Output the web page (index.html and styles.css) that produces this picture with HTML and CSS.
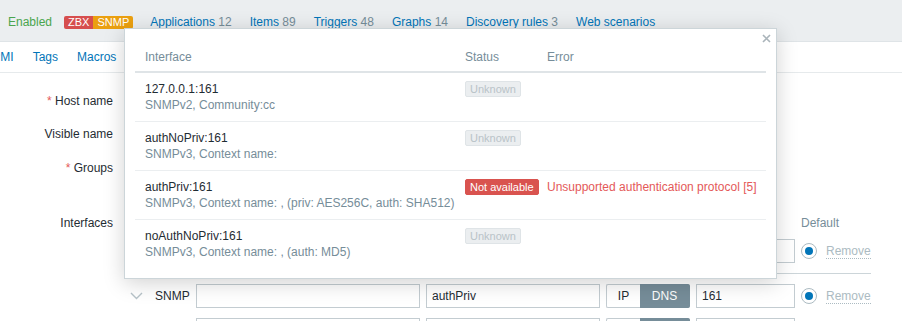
FILE: index.html
```html
<!DOCTYPE html>
<html>
  <head>
    <title>Host</title>
    <meta charset="UTF-8">
    <link rel="stylesheet" href="styles.css">
  </head>

  <body>
    <div class="host-bar">
      <span class="status-on">Enabled</span>
      <span class="avail">
        <span class="avail-red">ZBX</span><span class="avail-yellow">SNMP</span>
      </span>
      <nav class="host-nav">
        <a href="#">Applications <span class="count">12</span></a>
        <a href="#">Items <span class="count">89</span></a>
        <a href="#">Triggers <span class="count">48</span></a>
        <a href="#">Graphs <span class="count">14</span></a>
        <a href="#">Discovery rules <span class="count">3</span></a>
        <a href="#">Web scenarios</a>
      </nav>
    </div>

    <ul class="tabs">
      <li><a href="#">IPMI</a></li>
      <li><a href="#">Tags</a></li>
      <li><a href="#">Macros</a></li>
      <li><a href="#">Inventory</a></li>
      <li><a href="#">Encryption</a></li>
    </ul>

    <form class="form">
      <div class="form-row">
        <label class="req">Host name</label>
        <div><input class="input wide" type="text" value="snmp-test"></div>
      </div>
      <div class="form-row">
        <label>Visible name</label>
        <div><input class="input wide" type="text"></div>
      </div>
      <div class="form-row">
        <label class="req groups">Groups</label>
        <div><div class="multiselect"></div></div>
      </div>
      <div class="form-row">
        <label>Interfaces</label>
        <div class="ifaces">
          <div class="iface-head">
            <span class="c-toggle"></span>
            <span class="c-type">Type</span>
            <span class="c-ip">IP address</span>
            <span class="c-dns">DNS name</span>
            <span class="c-conn">Connect to</span>
            <span class="c-port">Port</span>
            <span class="c-def">Default</span>
          </div>

          <div class="iface-row first">
            <span class="c-toggle"><svg class="chevron" width="13" height="8" viewBox="0 0 13 8"><polyline points="1,1 6.5,6.5 12,1" /></svg></span>
            <span class="c-type">SNMP</span>
            <input class="input c-ip" type="text" value="127.0.0.1">
            <input class="input c-dns" type="text">
            <span class="toggle c-conn"><span class="on">IP</span><span>DNS</span></span>
            <input class="input c-port" type="text" value="161">
            <span class="c-def"><span class="radio"></span></span>
            <a class="remove">Remove</a>
          </div>

          <div class="iface-row">
            <span class="c-toggle"><svg class="chevron" width="13" height="8" viewBox="0 0 13 8"><polyline points="1,1 6.5,6.5 12,1" /></svg></span>
            <span class="c-type">SNMP</span>
            <input class="input c-ip" type="text">
            <input class="input c-dns" type="text" value="authPriv">
            <span class="toggle c-conn"><span>IP</span><span class="on">DNS</span></span>
            <input class="input c-port" type="text" value="161">
            <span class="c-def"><span class="radio"></span></span>
            <a class="remove">Remove</a>
          </div>

          <div class="iface-row">
            <span class="c-toggle"><svg class="chevron" width="13" height="8" viewBox="0 0 13 8"><polyline points="1,1 6.5,6.5 12,1" /></svg></span>
            <span class="c-type">SNMP</span>
            <input class="input c-ip" type="text">
            <input class="input c-dns" type="text" value="noAuthNoPriv">
            <span class="toggle c-conn"><span>IP</span><span class="on">DNS</span></span>
            <input class="input c-port" type="text" value="161">
            <span class="c-def"><span class="radio"></span></span>
            <a class="remove">Remove</a>
          </div>
        </div>
      </div>
    </form>

    <!-- interface availability hint -->
    <div class="hint">
      <button class="hint-close" type="button">
        <svg width="9" height="9" viewBox="0 0 9 9"><path d="M1 1 L8 8 M8 1 L1 8" /></svg>
      </button>
      <table class="hint-table">
        <thead>
          <tr>
            <th class="col-iface">Interface</th>
            <th class="col-status">Status</th>
            <th>Error</th>
          </tr>
        </thead>
        <tbody>
          <tr>
            <td>
              <div class="iface-name">127.0.0.1:161</div>
              <div class="iface-details">SNMPv2, Community:cc</div>
            </td>
            <td><span class="badge grey">Unknown</span></td>
            <td></td>
          </tr>
          <tr>
            <td>
              <div class="iface-name">authNoPriv:161</div>
              <div class="iface-details">SNMPv3, Context name:</div>
            </td>
            <td><span class="badge grey">Unknown</span></td>
            <td></td>
          </tr>
          <tr>
            <td>
              <div class="iface-name">authPriv:161</div>
              <div class="iface-details">SNMPv3, Context name: , (priv: AES256C, auth: SHA512)</div>
            </td>
            <td><span class="badge red">Not available</span></td>
            <td class="error">Unsupported authentication protocol [5]</td>
          </tr>
          <tr>
            <td>
              <div class="iface-name">noAuthNoPriv:161</div>
              <div class="iface-details">SNMPv3, Context name: , (auth: MD5)</div>
            </td>
            <td><span class="badge grey">Unknown</span></td>
            <td></td>
          </tr>
        </tbody>
      </table>
    </div>
  </body>
</html>
```

FILE: styles.css
```css
html * {
  box-sizing: border-box;
}

body {
  margin: 0;
  font-family: "Liberation Sans", Arial, sans-serif;
  font-size: 12px;
  color: #1f2c33;
  background: #fff;
  overflow: hidden;
}

a {
  color: #0275b8;
  text-decoration: none;
}

/* top bar */
.host-bar {
  display: flex;
  align-items: center;
  height: 42px;
  padding: 3px 0 0 8px;
  background: #ebeef0;
  border-bottom: 1px solid #dfe4e7;
  white-space: nowrap;
}

.status-on {
  color: #4aa54e;
  margin-right: 12px;
}

.avail {
  display: flex;
  margin-right: 17px;
  font-size: 11px;
  line-height: 13px;
  color: #fff;
}

.avail span {
  padding: 0 4px;
}

.avail-red {
  background: #d64e4e;
  border-radius: 2px 0 0 2px;
}

.avail-yellow {
  background: #eba010;
  border-radius: 0 2px 2px 0;
}

.host-nav {
  display: flex;
  gap: 18px;
}

.count {
  color: #768d99;
}

/* tabs */
.tabs {
  display: flex;
  gap: 19px;
  margin: 0 0 0 -11px;
  padding: 0;
  list-style: none;
  height: 31px;
  line-height: 30px;
  border-bottom: 1px solid #e6eaec;
  white-space: nowrap;
}

/* form */
.form {
  padding-top: 16px;
}

.form-row {
  display: grid;
  grid-template-columns: 113px 1fr;
  column-gap: 12px;
  margin-bottom: 9px;
}

.form-row label {
  text-align: right;
  line-height: 24px;
  white-space: nowrap;
}

.form-row label.groups {
  padding-top: 1px;
}

.req::before {
  content: "* ";
  color: #e45959;
}

.input {
  height: 24px;
  padding: 0 5px;
  border: 1px solid #c3ccd1;
  background: #fff;
  font: inherit;
  color: #1f2c33;
}

.wide {
  width: 453px;
}

.multiselect {
  width: 453px;
  height: 47px;
  border: 1px solid #c3ccd1;
}

.ifaces {
  width: 746px;
}

.iface-head,
.iface-row {
  display: flex;
  align-items: center;
  gap: 6px;
  white-space: nowrap;
}

.iface-head {
  line-height: 24px;
  color: #768d99;
}

.iface-row {
  padding-top: 10px;
}

.iface-row.first {
  padding: 4px 0 10px;
  border-bottom: 1px solid #ccd5d9;
}

.iface-head > span,
.iface-row > * {
  flex: none;
}

.c-toggle {
  width: 24px;
  padding-left: 5px;
  display: flex;
}

.c-type {
  width: 35px;
}

.c-ip {
  width: 224px;
}

.c-dns {
  width: 174px;
}

.c-conn {
  width: 84px;
}

.c-port {
  width: 99px;
}

.c-def {
  width: 16px;
  display: flex;
}

.chevron polyline {
  fill: none;
  stroke: #b7c3c9;
  stroke-width: 1.4;
}

.toggle {
  display: flex;
  height: 24px;
  line-height: 22px;
  text-align: center;
}

.toggle span {
  border: 1px solid #c3ccd1;
}

.toggle span:first-child {
  width: 34px;
  border-right: none;
  border-radius: 2px 0 0 2px;
}

.toggle span:last-child {
  width: 50px;
  border-left: none;
  border-radius: 0 2px 2px 0;
}

.toggle span.on {
  background: #768d99;
  border-color: #768d99;
  color: #fff;
}

.radio {
  display: flex;
  align-items: center;
  justify-content: center;
  width: 16px;
  height: 16px;
  border: 1px solid #acbbc2;
  border-radius: 50%;
  background: #fff;
}

.radio::after {
  content: "";
  width: 8px;
  height: 8px;
  border-radius: 50%;
  background: #0275b8;
}

.remove {
  margin-left: 3px;
  color: #acbbc2;
  line-height: 14px;
  border-bottom: 1px dotted #acbbc2;
}

/* hint popup */
.hint {
  position: absolute;
  left: 124px;
  top: 28px;
  width: 653px;
  padding: 0 10px 10px;
  background: #fff;
  border: 1px solid #ccd5d9;
  box-shadow: 0 4px 20px 0 rgba(0, 0, 0, 0.18);
  z-index: 10;
}

.hint-close {
  position: absolute;
  top: 5px;
  right: 5px;
  width: 9px;
  height: 9px;
  padding: 0;
  border: none;
  background: none;
  cursor: pointer;
}

.hint-close svg {
  display: block;
}

.hint-close path {
  stroke: #aab4ba;
  stroke-width: 1.6;
}

.hint-table {
  width: 100%;
  border-collapse: collapse;
  table-layout: fixed;
}

.hint-table th {
  text-align: left;
  font-weight: normal;
  color: #768d99;
  line-height: 16px;
  padding: 20px 0 6px 10px;
  border-bottom: 2px solid #dfe4e7;
}

.col-iface {
  width: 320px;
}

.col-status {
  width: 82px;
}

.hint-table td {
  vertical-align: top;
  line-height: 16px;
  padding: 8px 0 7px 10px;
  border-bottom: 1px solid #ebeef0;
  white-space: nowrap;
}

.hint-table tr:last-child td {
  border-bottom: none;
}

.iface-details {
  color: #768d99;
  line-height: 17px;
}

.badge {
  display: inline-block;
  vertical-align: top;
  padding: 0 4px;
  font-size: 11px;
  line-height: 14px;
  border: 1px solid;
  border-radius: 2px;
}

.badge.grey {
  background: #ebeef0;
  border-color: #dfe4e7;
  color: #b9c3c8;
}

.badge.red {
  background: #d9534f;
  border-color: #d9534f;
  color: #fff;
}

.error {
  color: #e45959;
}
```
